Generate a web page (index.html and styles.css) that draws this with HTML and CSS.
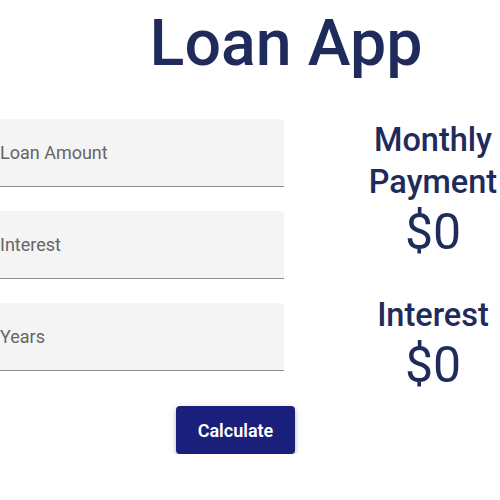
FILE: index.html
```html
<!DOCTYPE html>
<html>
<head>
<meta charset="utf-8">
<link rel="stylesheet" href="styles.css">
</head>
<body>
<div class="page">
  <h1 class="title">Loan App</h1>
  <div class="content">
    <div class="form">
      <div class="field"><span class="label">Loan Amount</span></div>
      <div class="field"><span class="label">Interest</span></div>
      <div class="field"><span class="label">Years</span></div>
    </div>
    <div class="results">
      <div class="result-head">Monthly<br>Payment</div>
      <div class="result-value">$0</div>
      <div class="result-head second">Interest</div>
      <div class="result-value">$0</div>
    </div>
  </div>
  <div class="actions">
    <button class="btn">Calculate</button>
  </div>
</div>
</body>
</html>
```
FILE: styles.css
```css
html, body {
  margin: 0;
  padding: 0;
  background: #ffffff;
  overflow: hidden;
}
body {
  font-family: Roboto, "Liberation Sans", sans-serif;
}
.page {
  width: 500px;
}
.title {
  margin: 5px 0 0 72px;
  font-size: 64.5px;
  font-weight: 500;
  line-height: 1.2;
  text-align: center;
  color: #1f2b5b;
}
.content {
  display: flex;
  margin-top: 34px;
}
.form {
  flex: none;
  width: 300px;
  margin-left: -16px;
  margin-top: 3px;
  display: flex;
  flex-direction: column;
  gap: 24px;
}
.field {
  height: 67px;
  background: #f4f4f4;
  border-radius: 4px 4px 0 0;
  border-bottom: 1px solid #8f8f8f;
  display: flex;
  align-items: center;
  padding-left: 16px;
}
.label {
  font-size: 18px;
  color: #666666;
}
.results {
  flex: none;
  margin-left: 79px;
  width: 140px;
  text-align: center;
  color: #1f2b5b;
}
.result-head {
  font-size: 32.5px;
  font-weight: 500;
  line-height: 42px;
  margin-top: 3px;
}
.result-head.second {
  margin-top: 37px;
}
.result-value {
  font-size: 50px;
  line-height: 50px;
  margin-top: 4px;
}
.actions {
  padding-left: 176px;
  margin-top: 16px;
}
.btn {
  width: 119px;
  height: 48px;
  border: none;
  border-radius: 4px;
  background: #1a1f7c;
  color: #ffffff;
  font-family: Roboto, "Liberation Sans", sans-serif;
  font-size: 18px;
  font-weight: 600;
  box-shadow: 0 3px 4px rgba(0,0,0,0.2), 0 1px 8px rgba(0,0,0,0.12);
}
```
